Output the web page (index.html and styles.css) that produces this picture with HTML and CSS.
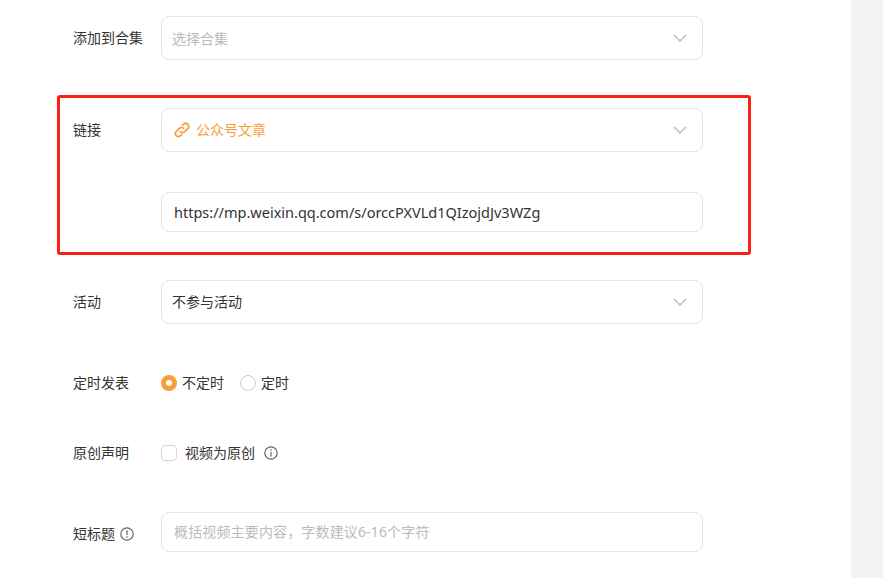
FILE: index.html
```html
<!DOCTYPE html>
<html lang="en">
<head>
    <meta charset="UTF-8">
    <meta name="viewport" content="width=device-width, initial-scale=1.0">
    <title>发表视频</title>
    <link rel="stylesheet" href="styles.css">
</head>
<body>
    <div class="page">
        <main class="form">
            <div class="row">
                <div class="label">添加到合集</div>
                <div class="field select">
                    <span class="placeholder lower">选择合集</span>
                    <svg class="chevron" viewBox="0 0 14 8"><path d="M1 1l6 6 6-6"/></svg>
                </div>
            </div>

            <section class="highlight">
                <div class="row">
                    <div class="label">链接</div>
                    <div class="field select link-select">
                        <svg class="link-icon" viewBox="0 0 16 16"><path d="M6.4 9.6a3 3 0 0 0 4.3 0l3-3a3 3 0 0 0-4.300-4.300l-1.200 1.200"/><path d="M9.600 6.400a3 3 0 0 0-4.300 0l-3 3a3 3 0 0 0 4.300 4.300l1.200-1.200"/></svg>
                        <span>公众号文章</span>
                        <svg class="chevron" viewBox="0 0 14 8"><path d="M1 1l6 6 6-6"/></svg>
                    </div>
                </div>
                <div class="row link-row">
                    <div class="label"></div>
                    <div class="field input url">https://mp.weixin.qq.com/s/orccPXVLd1QIzojdJv3WZg</div>
                </div>
            </section>

            <div class="row activity-row">
                <div class="label">活动</div>
                <div class="field select">
                    <span>不参与活动</span>
                    <svg class="chevron" viewBox="0 0 14 8"><path d="M1 1l6 6 6-6"/></svg>
                </div>
            </div>

            <div class="row small-row schedule-row">
                <div class="label">定时发表</div>
                <span class="radio checked"></span>
                <span class="option">不定时</span>
                <span class="radio second"></span>
                <span class="option">定时</span>
            </div>

            <div class="row small-row original-row">
                <div class="label">原创声明</div>
                <span class="checkbox"></span>
                <span class="option check-text">视频为原创</span>
                <svg class="hint info" viewBox="0 0 14 14"><circle cx="7" cy="7" r="6.200"/><path d="M7 6v4.400M7 3.200v1.600"/></svg>
            </div>

            <div class="row title-row">
                <div class="label title-label">短标题<svg class="hint" viewBox="0 0 14 14"><circle cx="7" cy="7" r="6.200"/><path d="M7 3.200v4.800M7 9.200v1.600"/></svg></div>
                <div class="field input"><span class="placeholder wide">概括视频主要内容，字数建议6-16个字符</span></div>
            </div>
        </main>
        <aside class="side"></aside>
    </div>
</body>
</html>
```

FILE: styles.css
```css
html, body {
    height: 100%;
}
body {
    margin: 0;
    overflow: hidden;
    background-color: #fff;
    color: #333;
    font-family: "Noto Sans", "Noto Sans CJK SC", sans-serif;
    font-size: 14px;
    line-height: 20px;
}
.page {
    display: flex;
    height: 100%;
}
.form {
    flex: 1;
    padding: 16px 0 0 57px;
}
.side {
    width: 32px;
    background-color: #f4f4f4;
}
.row {
    display: flex;
    align-items: center;
    padding-left: 16px;
}
.label {
    display: flex;
    align-items: center;
    flex: none;
    width: 88px;
}
.title-label {
    margin-top: 4px;
}
.field {
    display: flex;
    align-items: center;
    box-sizing: border-box;
    width: 542px;
    border: 1px solid #e5e5e5;
    border-radius: 8px;
    background: #fff;
}
.field span {
    margin-top: -1px;
}
.field .lower {
    margin-top: 1px;
}
.select {
    height: 44px;
    padding: 0 15px 0 10px;
}
.input {
    height: 40px;
    padding: 0 12px;
}
.placeholder {
    color: #bbb;
}
.wide {
    letter-spacing: 0.15px;
}
.chevron {
    width: 14px;
    height: 8px;
    margin-left: auto;
    fill: none;
    stroke: #bdbdbd;
    stroke-width: 1.5;
}
.highlight {
    box-sizing: border-box;
    width: 694px;
    height: 160px;
    margin-top: 35px;
    padding-top: 10px;
    border: 3px solid #fc1f14;
    border-radius: 3px;
}
.highlight .row {
    padding-left: 13px;
}
.link-row {
    margin-top: 40px;
}
.link-select {
    padding-left: 12px;
    color: #fa9d3b;
}
.link-icon {
    width: 16px;
    height: 16px;
    margin-right: 6px;
    fill: none;
    stroke: #fa9d3b;
    stroke-width: 1.700;
    stroke-linecap: round;
}
.url {
    font-size: 14.5px;
    color: #333;
}
.activity-row {
    margin-top: 25px;
}
.small-row {
    height: 20px;
}
.schedule-row {
    margin-top: 49px;
}
.original-row {
    margin-top: 50px;
}
.title-row {
    margin-top: 49px;
}
.radio {
    flex: none;
    box-sizing: border-box;
    width: 16px;
    height: 16px;
    border: 1px solid #ccc;
    border-radius: 50%;
}
.radio.checked {
    border: 5px solid #fa9d3b;
}
.radio.second {
    margin-left: 16px;
}
.option {
    margin-top: -1px;
    margin-left: 5px;
}
.checkbox {
    flex: none;
    box-sizing: border-box;
    width: 16px;
    height: 16px;
    border: 1px solid #d5d5d5;
    border-radius: 4px;
}
.check-text {
    margin-left: 8px;
}
.hint {
    flex: none;
    width: 14px;
    height: 14px;
    margin-left: 5px;
    fill: none;
    stroke: #666;
    stroke-width: 1.200;
}
.info {
    margin-left: 9px;
}
```
